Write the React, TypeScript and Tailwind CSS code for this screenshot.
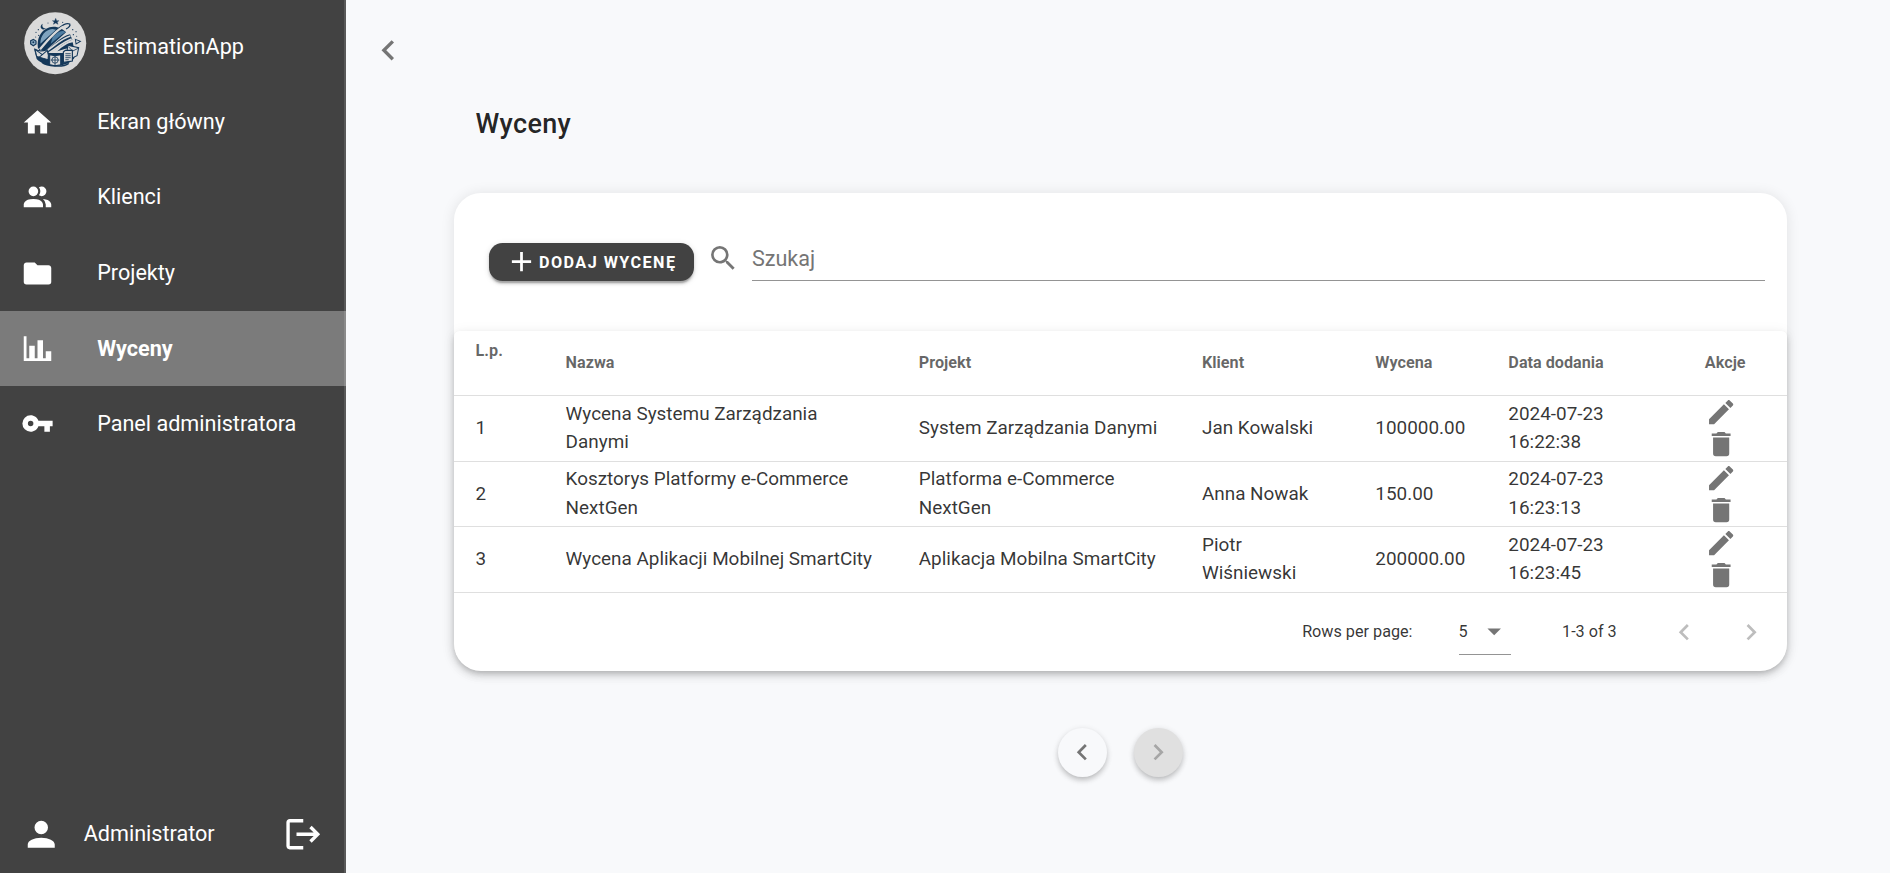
import React from "react";

const icons = {
  home: "M10,20V14H14V20H19V12H22L12,3L2,12H5V20H10Z",
  people:
    "M16 17V19H2V17S2 13 9 13 16 17 16 17M12.5 7.5A3.5 3.5 0 1 0 9 11A3.5 3.5 0 0 0 12.5 7.5M15.94 13A5.32 5.32 0 0 1 18 17V19H22V17S22 13.37 15.94 13M15 4A3.39 3.39 0 0 0 13.07 4.59A5 5 0 0 1 13.07 10.41A3.39 3.39 0 0 0 15 11A3.5 3.5 0 0 0 15 4Z",
  folder:
    "M10,4H4C2.89,4 2,4.89 2,6V18A2,2 0 0,0 4,20H20A2,2 0 0,0 22,18V8C22,6.89 21.1,6 20,6H12L10,4Z",
  chart: "M22,21H2V3H4V19H6V10H10V19H12V6H16V19H18V14H22V21Z",
  key: "M7,14A2,2 0 0,1 5,12A2,2 0 0,1 7,10A2,2 0 0,1 9,12A2,2 0 0,1 7,14M12.65,10C11.83,7.67 9.61,6 7,6A6,6 0 0,0 1,12A6,6 0 0,0 7,18C9.61,18 11.83,16.33 12.65,14H17V18H21V14H23V10H12.65Z",
  account:
    "M12,4A4,4 0 0,1 16,8A4,4 0 0,1 12,12A4,4 0 0,1 8,8A4,4 0 0,1 12,4M12,14C16.42,14 20,15.79 20,18V20H4V18C4,15.79 7.58,14 12,14Z",
  logout:
    "M17 7L15.59 8.41L18.17 11H8V13H18.17L15.59 15.58L17 17L22 12M4 5H12V3H4C2.9 3 2 3.9 2 5V19C2 20.1 2.9 21 4 21H12V19H4V5Z",
  left: "M15.41,16.58L10.83,12L15.41,7.41L14,6L8,12L14,18L15.41,16.58Z",
  right: "M8.59,16.58L13.17,12L8.59,7.41L10,6L16,12L10,18L8.59,16.58Z",
  plus: "M19,13H13V19H11V13H5V11H11V5H13V11H19V13Z",
  search:
    "M9.5,3A6.5,6.5 0 0,1 16,9.5C16,11.11 15.41,12.59 14.44,13.73L14.71,14H15.5L20.5,19L19,20.5L14,15.5V14.71L13.73,14.44C12.59,15.41 11.11,16 9.5,16A6.5,6.5 0 0,1 3,9.5A6.5,6.5 0 0,1 9.5,3M9.5,5C7,5 5,7 5,9.5C5,12 7,14 9.5,14C12,14 14,12 14,9.5C14,7 12,5 9.5,5Z",
  pencil:
    "M20.71,7.04C21.1,6.65 21.1,6 20.71,5.63L18.37,3.29C18,2.9 17.35,2.9 16.96,3.29L15.12,5.12L18.87,8.87M3,17.25V21H6.75L17.81,9.93L14.06,6.18L3,17.25Z",
  trash:
    "M19,4H15.5L14.5,3H9.5L8.5,4H5V6H19M6,19A2,2 0 0,0 8,21H16A2,2 0 0,0 18,19V7H6V19Z",
  caret: "M7,10L12,15L17,10H7Z",
};

type IconName = keyof typeof icons;

function Icon({ name, className = "size-[32.4px]" }: { name: IconName; className?: string }) {
  return (
    <svg viewBox="0 0 24 24" fill="currentColor" className={`block shrink-0 ${className}`}>
      <path d={icons[name]} />
    </svg>
  );
}

function Logo() {
  return (
    <svg viewBox="28 23 187 187" className="block size-[62.4px] shrink-0">
      <circle cx="121.500" cy="116.500" r="93" fill="#dadada" />
      <path d="M70 132C64 98 84 68 116 67C132 67 146 74 154 84L88 144Z" fill="#14385a" />
      <path d="M77 118C77 94 92 76 113 74L124 76C108 90 92 104 77 118Z" fill="#7fa3bf" />
      <path d="M114 98C128 84 142 74 152 84C138 92 126 104 108 118Z" fill="#4f7ea3" />
      <path d="M72 140C90 116 112 88 134 70C146 60 158 56 165 59C168 64 162 70 154 74" fill="none" stroke="#14385a" strokeWidth="4" />
      <path d="M76 135C98 108 120 80 146 67" fill="none" stroke="#dadada" strokeWidth="7" />
      <path d="M86 142C110 130 140 94 166 90L173 106C150 112 124 136 102 147Z" fill="#14385a" />
      <path d="M92 142C118 126 140 102 167 95" fill="none" stroke="#dadada" strokeWidth="5" />
      <path d="M102 146C126 132 146 112 171 104" fill="none" stroke="#dadada" strokeWidth="5" />
      <path d="M128 141C142 128 158 116 174 114L177 128L150 134Z" fill="#14385a" />
      <path d="M123 42L126 49L133 49L127.500 53L130 60L123 56L116 60L118.500 53L113 49L120 49Z" fill="#14385a" stroke="#14385a" />
      <path d="M84 58C77 62 76 70 82 74C86 77 92 75 94 72C85 73 81 66 84 58Z" fill="#14385a" />
      <g fill="#14385a">
        <circle cx="71" cy="76" r="2" />
        <circle cx="64" cy="84" r="1.800" />
        <circle cx="72" cy="93" r="2" />
        <circle cx="63" cy="98" r="1.500" />
        <circle cx="100" cy="56" r="1.500" />
        <circle cx="144" cy="54" r="1.800" />
        <circle cx="174" cy="76" r="2" />
        <circle cx="184" cy="82" r="1.800" />
        <circle cx="176" cy="91" r="2" />
        <circle cx="186" cy="96" r="1.500" />
      </g>
      <path d="M48 109L56 105L64 110L64 119L56 124L48 119Z" fill="#8fafc6" stroke="#14385a" strokeWidth="3.500" />
      <circle cx="56" cy="114" r="3" fill="#14385a" />
      <path d="M182 105L197 111L184 119Z" fill="none" stroke="#14385a" strokeWidth="3" />
      <path d="M58 134L66 164C88 190 156 192 178 162L188 136L150 146H104Z" fill="#14385a" />
      <path d="M61 134C72 142 86 140 97 136L101 152L100 166L66 156Z" fill="#dadada" stroke="#14385a" strokeWidth="3" />
      <path d="M64 137L83 151L98 138M83 151L72 160" fill="none" stroke="#14385a" strokeWidth="3" />
      <path d="M159 123L192 130L187 154L174 160L156 152Z" fill="#dadada" stroke="#14385a" strokeWidth="3" />
      <path d="M160 126L174 140L190 132" fill="none" stroke="#14385a" strokeWidth="2.500" />
      <path d="M105 151L121 154L138 151V181L121 184L105 181Z" fill="#dadada" stroke="#14385a" strokeWidth="3" />
      <circle cx="121" cy="167" r="9.500" fill="none" stroke="#14385a" strokeWidth="2.500" />
      <path d="M121 152V184M108 167H134" stroke="#14385a" strokeWidth="2.500" />
      <path d="M146 143L152 138H173V170L146 174Z" fill="#dadada" stroke="#14385a" strokeWidth="3.500" />
      <path d="M152 148H168M152 154H168M152 160H168M152 166H162" stroke="#14385a" strokeWidth="2.500" />
      <path d="M82 174C96 185 144 191 162 177" fill="none" stroke="#14385a" strokeWidth="4" />
    </svg>
  );
}

const nav: { icon: IconName; label: string; active?: boolean }[] = [
  { icon: "home", label: "Ekran główny" },
  { icon: "people", label: "Klienci" },
  { icon: "folder", label: "Projekty" },
  { icon: "chart", label: "Wyceny", active: true },
  { icon: "key", label: "Panel administratora" },
];

const rows = [
  ["1", "Wycena Systemu Zarządzania Danymi", "System Zarządzania Danymi", "Jan Kowalski", "100000.00", "2024-07-23 16:22:38"],
  ["2", "Kosztorys Platformy e-Commerce NextGen", "Platforma e-Commerce NextGen", "Anna Nowak", "150.00", "2024-07-23 16:23:13"],
  ["3", "Wycena Aplikacji Mobilnej SmartCity", "Aplikacja Mobilna SmartCity", "Piotr Wiśniewski", "200000.00", "2024-07-23 16:23:45"],
];

const headers = ["L.p.", "Nazwa", "Projekt", "Klient", "Wycena", "Data dodania", "Akcje"];

function Sidebar() {
  return (
    <aside className="relative flex h-full w-[346px] shrink-0 flex-col bg-[#424242] text-[21.6px] text-white">
      <div className="flex h-[84.6px] items-start pl-[24.3px] pt-[12.3px]">
        <Logo />
        <span className="ml-[15.900px] mt-[19px] leading-8">EstimationApp</span>
      </div>
      <nav>
        {nav.map((item) => (
          <a
            key={item.label}
            className={`flex h-[75.4px] items-center pl-[20.6px] ${item.active ? "bg-[#7b7b7b] font-bold" : ""}`}
          >
            <Icon name={item.icon} className="size-[33px]" />
            <span className={`ml-[43.6px] leading-8 ${item.active ? "pt-[1.600px]" : "pb-[0.4px]"}`}>{item.label}</span>
          </a>
        ))}
      </nav>
      <div className="mt-auto flex h-[78px] items-center pl-[20.9px] pr-[22.6px]">
        <Icon name="account" className="size-[40.5px]" />
        <span className="ml-[22.3px] leading-8">Administrator</span>
        <Icon name="logout" className="ml-auto size-[40.5px]" />
      </div>
      <div className="absolute inset-y-0 right-0 w-[2px] bg-white/12" />
    </aside>
  );
}

function Toolbar() {
  return (
    <div className="flex h-[138px] items-start pl-[35px] pr-[22px] pt-[50px]">
      <button className="flex h-[37.8px] w-[205px] items-center rounded-[13.5px] bg-[#424242] pl-[16px] text-[16.2px] font-bold tracking-[1.446px] text-white shadow-[0_4px_1.35px_-2.7px_rgba(0,0,0,0.2),0_2.7px_2.7px_0_rgba(0,0,0,0.14),0_1.35px_6.75px_0_rgba(0,0,0,0.12)]">
        <Icon name="plus" className="size-[33px]" />
        <span className="ml-[1px] whitespace-nowrap pt-[2px]">DODAJ WYCENĘ</span>
      </button>
      <div className="ml-[12.7px] flex flex-1 text-[#757575]">
        <Icon name="search" className="-mt-[1.500px] size-[32.4px]" />
        <div className="ml-[12.8px] flex h-[38px] flex-1 items-start border-b border-[#949494] text-[21.6px] leading-[32px]">
          Szukaj
        </div>
      </div>
    </div>
  );
}

function Estimates() {
  return (
    <table className="w-full table-fixed border-separate border-spacing-0 text-left text-[18.9px] leading-[28.35px] text-black/80">
      <colgroup>
        <col className="w-[90px]" />
        <col className="w-[353.2px]" />
        <col className="w-[283.2px]" />
        <col className="w-[173.4px]" />
        <col className="w-[133px]" />
        <col className="w-[196.5px]" />
        <col />
      </colgroup>
      <thead>
        <tr className="h-[65px] text-[16.2px] leading-6 text-black/60">
          {headers.map((h, i) => (
            <th
              key={h}
              className={`border-b border-[#dfdfdf] pl-[21.6px] pt-0 font-bold ${i === 0 ? "pb-[25px]" : "pb-[1px]"}`}
            >
              {h}
            </th>
          ))}
        </tr>
      </thead>
      <tbody>
        {rows.map((row) => (
          <tr key={row[0]} className="h-[65.6px]">
            {row.map((cell, i) => (
              <td
                key={i}
                className={`border-b border-[#dfdfdf] pb-[0.4px] pl-[21.6px] pt-0 ${i === 1 || i === 3 ? "pr-[21.6px]" : i === 5 ? "pr-[60px]" : "pr-[10px]"}`}
              >
                {cell}
              </td>
            ))}
            <td className="border-b border-[#dfdfdf] py-0 pl-[21.4px] text-[#757575]">
              <Icon name="pencil" className="size-[32.3px]" />
              <Icon name="trash" className="size-[32.3px]" />
            </td>
          </tr>
        ))}
      </tbody>
    </table>
  );
}

function Footer() {
  return (
    <div className="flex h-[78px] items-center justify-end pr-[19.7px] text-[16.2px] leading-6 text-black/80">
      <span className="pt-[1px]">Rows per page:</span>
      <div className="ml-[46px] flex h-[46.500px] w-[52px] items-center justify-between border-b border-[#949494]">
        <span className="pt-[2px]">5</span>
        <Icon name="caret" className="size-[32.4px] text-[#757575]" />
      </div>
      <span className="ml-[51.500px] w-[54px] whitespace-nowrap pt-[1px]">1-3 of 3</span>
      <Icon name="left" className="ml-[51.500px] size-[32.4px] text-[#bdbdbd]" />
      <Icon name="right" className="ml-[35px] size-[32.4px] text-[#bdbdbd]" />
    </div>
  );
}

export default function App() {
  return (
    <div className="flex h-[873px] w-full overflow-hidden bg-[#f8f9fb] font-['Roboto',sans-serif]">
      <Sidebar />
      <main className="flex flex-1 flex-col">
        <div className="flex h-[100px] items-center pl-[22px] text-[#757575]">
          <Icon name="left" className="size-[40.5px]" />
        </div>
        <h1 className="ml-[129.500px] h-[93px] pt-[6px] text-[27px] font-medium leading-[36px] tracking-[0.34px] text-black/87">
          Wyceny
        </h1>
        <section className="ml-[108px] w-[1333px] rounded-[27px] bg-white shadow-[0_1.35px_13.5px_0_rgba(0,0,0,0.1)]">
          <Toolbar />
          <div className="h-[340px] rounded-b-[27px] rounded-t-[5.4px] bg-white shadow-[0_2.7px_5.4px_-1.35px_rgba(0,0,0,0.12),0_4px_8px_0_rgba(0,0,0,0.1),0_1.35px_13.5px_0_rgba(0,0,0,0.06)]">
            <Estimates />
            <Footer />
          </div>
        </section>
        <div className="ml-[108px] mt-[57px] flex w-[1333px] justify-center gap-[27px]">
          <button className="flex size-[48.6px] items-center justify-center rounded-full bg-[#f8f9fb] pr-[1px] text-[#757575] shadow-[0_4px_6.75px_-1.35px_rgba(0,0,0,0.2),0_1.35px_6.75px_0_rgba(0,0,0,0.12)]">
            <Icon name="left" />
          </button>
          <button className="flex size-[48.6px] items-center justify-center rounded-full bg-[#e0e0e0] text-[#a6a6a6] shadow-[0_4px_6.75px_-1.35px_rgba(0,0,0,0.2),0_1.35px_6.75px_0_rgba(0,0,0,0.12)]">
            <Icon name="right" />
          </button>
        </div>
      </main>
    </div>
  );
}
